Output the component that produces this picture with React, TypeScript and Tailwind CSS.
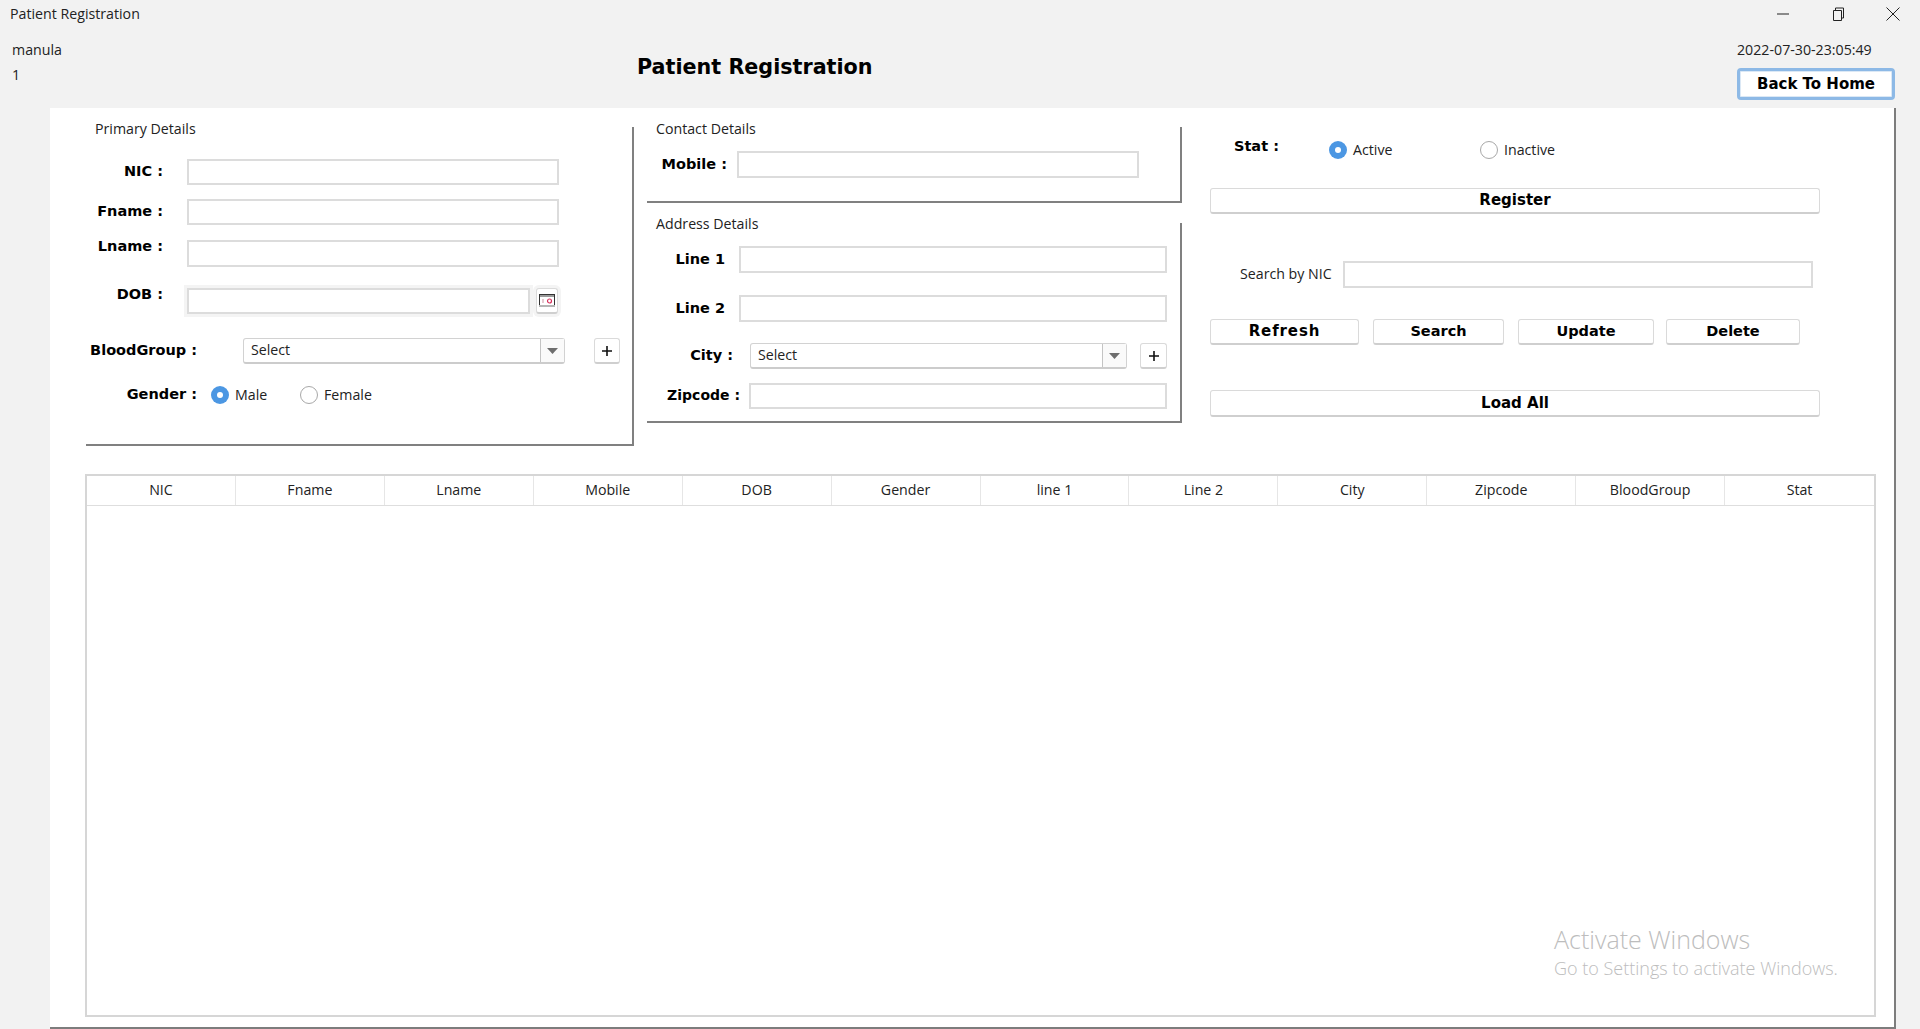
import React from "react";

const ui = "font-['Open_Sans',sans-serif] text-[14.2px] text-[#222]";
const bold = "font-['DejaVu_Sans',sans-serif] font-bold text-[14.5px] text-black";
const inputCls = "block bg-white border-2 border-[#dcdcdc] h-full";
const btnCls = "flex items-center justify-center bg-white rounded-[3px] border border-[#dadada] border-b-2 border-b-[#cfcfcf] h-full";

function Field({ w, className = "" }: { w: string; className?: string }) {
  return <div className={`${inputCls} ${w} ${className}`} />;
}

function Combo({ w }: { w: string }) {
  return (
    <div className={`flex h-full bg-white rounded-[3px] border border-[#d2d2d2] border-b-2 border-b-[#cccccc] ${w}`}>
      <div className={`flex-1 flex items-center pl-[7px] pb-[1px] ${ui}`}>Select</div>
      <div className="w-[24px] border-l border-[#c4c4c4] flex items-center justify-center bg-[#fafafa]">
        <svg width="11" height="6" viewBox="0 0 11 6"><path d="M0 0h11L5.5 6z" fill="#6e6e6e" /></svg>
      </div>
    </div>
  );
}

function Radio({ on, label, w }: { on?: boolean; label: string; w: string }) {
  return (
    <div className={`flex items-center h-[18px] ${w}`}>
      {on ? (
        <span className="flex items-center justify-center w-[18px] h-[18px] rounded-full bg-[#4c97e3]">
          <span className="w-[6px] h-[6px] rounded-full bg-white" />
        </span>
      ) : (
        <span className="w-[18px] h-[18px] rounded-full border border-[#a8a8a8] bg-white" />
      )}
      <span className={`ml-[6px] pb-[1px] ${ui}`}>{label}</span>
    </div>
  );
}

function Plus({ w }: { w: string }) {
  return (
    <div className={`${btnCls} ${w}`}>
      <svg width="10" height="10" viewBox="0 0 10 10"><path d="M5 0v10M0 5h10" stroke="#111" strokeWidth="1.6" /></svg>
    </div>
  );
}

function Btn({ w, children, className = "" }: { w: string; children: React.ReactNode; className?: string }) {
  return <div className={`${btnCls} ${w} ${bold} ${className}`}>{children}</div>;
}

const columns = ["NIC", "Fname", "Lname", "Mobile", "DOB", "Gender", "line 1", "Line 2", "City", "Zipcode", "BloodGroup", "Stat"];

export default function App() {
  return (
    <div className="relative w-[1920px] h-[1029px] overflow-hidden bg-[#f2f2f2] flex flex-col">
      <div className="flex items-center justify-between h-[28px] pl-[10px] shrink-0">
        <span className={`${ui} pb-[1px]`}>Patient Registration</span>
        <div className="flex h-full">
          <div className="w-[55px] flex items-center justify-center">
            <svg width="12" height="2" viewBox="0 0 12 2"><path d="M0 1h12" stroke="#222" strokeWidth="1" /></svg>
          </div>
          <div className="w-[55px] flex items-center justify-center mr-[1px]">
            <svg width="12" height="14" viewBox="0 0 12 14" fill="none"><path d="M1.5 3.5h8v10h-8z M3.5 3.5V1h8v10H9.5" stroke="#222" strokeWidth="1" /></svg>
          </div>
          <div className="w-[54px] flex items-center justify-center">
            <svg width="14" height="14" viewBox="0 0 14 14"><path d="M.5.5l13 13M13.5.5l-13 13" stroke="#222" strokeWidth="1" /></svg>
          </div>
        </div>
      </div>

      <div className="flex h-[80px] shrink-0">
        <div className="w-[637px] pl-[12px] pt-[12px]">
          <div className={`h-[20px] leading-[20px] ${ui}`}>manula</div>
          <div className={`h-[20px] leading-[20px] mt-[5px] ${ui}`}>1</div>
        </div>
        <div className="pt-[24px] font-['DejaVu_Sans',sans-serif] font-bold text-[20.7px] leading-[30px] text-black">Patient Registration</div>
        <div className="ml-auto mr-[25px] w-[158px] pt-[12px]">
          <div className={`h-[20px] leading-[20px] ${ui}`}>2022-07-30-23:05:49</div>
          <div className={`mt-[8px] h-[32px] flex items-center justify-center bg-white rounded-[4px] border-[3px] border-[#8db9e6] shadow-[inset_0_0_0_1px_#dbe8f5] ${bold} text-[15px]`}>Back To Home</div>
        </div>
      </div>

      <div className="ml-[50px] w-[1846px] h-[921px] bg-white border-r-2 border-b-2 border-[#7d7d7d] shrink-0">
        <div className="flex h-[366px] pl-[36px]">
          {/* Primary Details */}
          <div className="flow-root w-[548px] h-[319px] mt-[19px] border-r-2 border-b-2 border-[#808080]">
            <div className={`-mt-[6px] ml-[9px] h-[16px] leading-[16px] ${ui}`}>Primary Details</div>
            <div className="flex h-[26px] mt-[22px]">
              <div className={`w-[77px] flex items-center justify-end pb-[1px] ${bold}`}>NIC :</div>
              <Field w="w-[372px] ml-[24px]" />
            </div>
            <div className="flex h-[26px] mt-[14px]">
              <div className={`w-[77px] flex items-center justify-end pb-[1px] ${bold}`}>Fname :</div>
              <Field w="w-[372px] ml-[24px]" />
            </div>
            <div className="flex h-[27px] mt-[15px]">
              <div className={`w-[77px] flex items-center justify-end pb-[14px] ${bold}`}>Lname :</div>
              <Field w="w-[372px] ml-[24px]" />
            </div>
            <div className="flex h-[26px] mt-[21px]">
              <div className={`w-[77px] flex items-center justify-end pb-[13px] ${bold}`}>DOB :</div>
              <Field w="w-[343px] ml-[24px]" className="shadow-[0_0_0_3px_#f4f4f4]" />
              <div className={`${btnCls} w-[22px] ml-[6px] shadow-[0_0_0_3px_#f4f4f4]`}>
                <svg width="16" height="13" viewBox="0 0 16 13">
                  <rect x="0.5" y="0.5" width="15" height="11" fill="#fff" stroke="#333" />
                  <rect x="1" y="1" width="14" height="2" fill="#9a9a9a" />
                  <rect x="0" y="11" width="16" height="2" fill="#b5b5b5" />
                  <circle cx="10.5" cy="7" r="2" fill="none" stroke="#d8345f" strokeWidth="1.2" />
                  <rect x="3" y="5" width="2" height="4" fill="#e6c8d0" />
                </svg>
              </div>
            </div>
            <div className="flex h-[26px] mt-[24px]">
              <div className={`w-[111px] flex items-center justify-end pb-[1px] ${bold}`}>BloodGroup :</div>
              <div className="ml-[46px] h-full"><Combo w="w-[322px]" /></div>
              <div className="ml-[29px] h-full"><Plus w="w-[26px]" /></div>
            </div>
            <div className="flex items-center h-[18px] mt-[22px]">
              <div className={`w-[111px] text-right ${bold}`}>Gender :</div>
              <div className="ml-[14px]"><Radio on label="Male" w="w-[89px]" /></div>
              <Radio label="Female" w="w-[80px]" />
            </div>
          </div>

          {/* Contact + Address */}
          <div className="ml-[13px] w-[535px] mt-[19px]">
            <div className="flow-root h-[76px] border-r-2 border-b-2 border-[#808080]">
              <div className={`-mt-[6px] ml-[9px] h-[16px] leading-[16px] ${ui}`}>Contact Details</div>
              <div className="flex h-[27px] mt-[14px]">
                <div className={`w-[80px] flex items-center justify-end ${bold}`}>Mobile :</div>
                <Field w="w-[402px] ml-[10px]" />
              </div>
            </div>
            <div className="flow-root h-[200px] mt-[20px] border-r-2 border-b-2 border-[#808080]">
              <div className={`-mt-[7px] ml-[9px] h-[16px] leading-[16px] ${ui}`}>Address Details</div>
              <div className="flex h-[27px] mt-[14px]">
                <div className={`w-[78px] flex items-center justify-end ${bold}`}>Line 1</div>
                <Field w="w-[428px] ml-[14px]" />
              </div>
              <div className="flex h-[27px] mt-[22px]">
                <div className={`w-[78px] flex items-center justify-end ${bold}`}>Line 2</div>
                <Field w="w-[428px] ml-[14px]" />
              </div>
              <div className="flex h-[26px] mt-[21px]">
                <div className={`w-[86px] flex items-center justify-end ${bold}`}>City :</div>
                <div className="ml-[17px] h-full"><Combo w="w-[377px]" /></div>
                <div className="ml-[13px] h-full"><Plus w="w-[27px]" /></div>
              </div>
              <div className="flex h-[26px] mt-[14px]">
                <div className={`w-[93px] flex items-center justify-end pb-[1px] ${bold} text-[14px]`}>Zipcode :</div>
                <Field w="w-[418px] ml-[9px]" />
              </div>
            </div>
          </div>

          {/* Actions */}
          <div className="ml-[28px] w-[610px] pt-[33px]">
            <div className="flex items-center h-[18px]">
              <div className={`w-[119px] pl-[24px] pb-[6px] ${bold}`}>Stat :</div>
              <Radio on label="Active" w="w-[151px]" />
              <Radio label="Inactive" w="w-[90px]" />
            </div>
            <div className="h-[26px] mt-[29px]"><Btn w="w-[610px]" className="text-[15px]">Register</Btn></div>
            <div className="flex h-[27px] mt-[47px]">
              <div className={`w-[133px] pl-[30px] pb-[1px] flex items-center ${ui}`}>Search by NIC</div>
              <Field w="w-[470px]" />
            </div>
            <div className="flex h-[26px] mt-[31px]">
              <Btn w="w-[149px]" className="text-[15px] tracking-[0.9px]">Refresh</Btn>
              <div className="ml-[14px] h-full"><Btn w="w-[131px]">Search</Btn></div>
              <div className="ml-[14px] h-full"><Btn w="w-[136px]">Update</Btn></div>
              <div className="ml-[12px] h-full"><Btn w="w-[134px]">Delete</Btn></div>
            </div>
            <div className="h-[27px] mt-[45px]"><Btn w="w-[610px]" className="text-[15px] pt-[1px]">Load All</Btn></div>
          </div>
        </div>

        {/* Table */}
        <div className="ml-[35px] w-[1791px] h-[543px] border-2 border-[#d6d6d6] bg-white">
          <div className="grid grid-cols-12 h-[30px] border-b border-[#dedede]">
            {columns.map((c) => (
              <div key={c} className={`flex items-center justify-center pb-[1px] border-r border-[#e6e6e6] last:border-r-0 ${ui}`}>{c}</div>
            ))}
          </div>
        </div>
      </div>

      <div className="absolute left-[1554px] top-[923px] font-['Open_Sans',sans-serif] font-light text-[#bdbdbd]">
        <div className="text-[25px] leading-[32px]">Activate Windows</div>
        <div className="text-[18px] leading-[24px] mt-[1px]">Go to Settings to activate Windows.</div>
      </div>
    </div>
  );
}
